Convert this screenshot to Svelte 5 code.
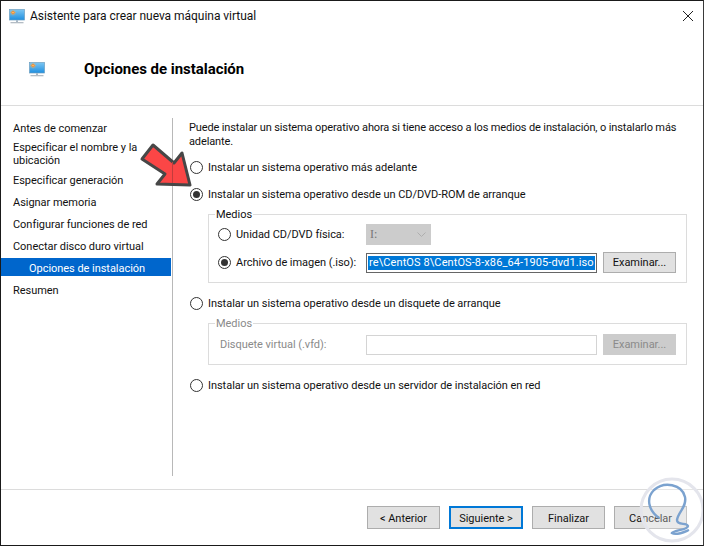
<script>
  const steps = [
    { label: 'Antes de comenzar', cls: '' },
    { label: 'Especificar el nombre y la ubicación', cls: 'two' },
    { label: 'Especificar generación', cls: '' },
    { label: 'Asignar memoria', cls: '' },
    { label: 'Configurar funciones de red', cls: '' },
    { label: 'Conectar disco duro virtual', cls: '' },
    { label: 'Opciones de instalación', cls: 'active' },
    { label: 'Resumen', cls: '' }
  ];
</script>

{#snippet monitor(id, w, h)}
  <svg width={w} height={h} viewBox="0 0 16 15">
    <defs>
      <linearGradient id={id} x1="0" y1="0" x2="0" y2="1">
        <stop offset="0" stop-color="#7cc6f2" />
        <stop offset="1" stop-color="#1f8fe0" />
      </linearGradient>
    </defs>
    <rect x="0.5" y="0.5" width="15" height="10.5" fill="url(#{id})" stroke="#6d9fc0" stroke-width="0.7" />
    <path d="M4 0.8 V6.4 M1.2 3.6 H6.8 M2 1.6 L6 5.6 M6 1.6 L2 5.6" stroke="#f4a850" stroke-width="0.8" />
    <circle cx="4" cy="3.6" r="1.5" fill="#f08c30" />
    <circle cx="4" cy="3.6" r="0.6" fill="#ffe2a8" />
    <rect x="7" y="11.3" width="2" height="1.6" fill="#9db0bf" />
    <rect x="1.5" y="13" width="13" height="1.3" fill="#b4bcc4" />
  </svg>
{/snippet}

{#snippet radio(checked)}
  <span class="radio">
    {#if checked}<span class="dot"></span>{/if}
  </span>
{/snippet}

<div class="window">
  <div class="titlebar">
    <span class="title-icon">{@render monitor('mon-a', 16, 15)}</span>
    <span class="title-text">Asistente para crear nueva máquina virtual</span>
    <svg class="close" width="10" height="10" viewBox="0 0 10 10">
      <path d="M0 0 L10 10 M10 0 L0 10" stroke="#222" stroke-width="1" />
    </svg>
  </div>

  <header class="head">
    <span class="head-icon">{@render monitor('mon-b', 16, 15)}</span>
    <h1>Opciones de instalación</h1>
  </header>

  <div class="body">
    <nav class="steps">
      {#each steps as step}
        <div class="step {step.cls}">{step.label}</div>
      {/each}
    </nav>

    <main class="content">
      <p class="intro">Puede instalar un sistema operativo ahora si tiene acceso a los medios de instalación, o instalarlo más<br>adelante.</p>

      <div class="option">{@render radio(false)}<span>Instalar un sistema operativo más adelante</span></div>
      <div class="option second">{@render radio(true)}<span>Instalar un sistema operativo desde un CD/DVD-ROM de arranque</span></div>

      <fieldset class="group">
        <legend>Medios</legend>
        <div class="row r1">
          {@render radio(false)}
          <span class="lbl">Unidad CD/DVD física:</span>
          <div class="select"><span class="drive">I:</span>
            <svg width="9" height="5" viewBox="0 0 9 5"><path d="M0.5 0.5 L4.5 4.5 L8.5 0.5" fill="none" stroke="#aeaeae" /></svg>
          </div>
        </div>
        <div class="row r2">
          {@render radio(true)}
          <span class="lbl">Archivo de imagen (.iso):</span>
          <div class="input focus"><span class="sel">re\CentOS 8\CentOS-8-x86_64-1905-dvd1.iso</span></div>
          <div class="btn browse">Examinar...</div>
        </div>
      </fieldset>

      <div class="option floppy">{@render radio(false)}<span>Instalar un sistema operativo desde un disquete de arranque</span></div>

      <fieldset class="group off">
        <legend>Medios</legend>
        <div class="row r3">
          <span class="lbl">Disquete virtual (.vfd):</span>
          <div class="input"></div>
          <div class="btn browse disabled">Examinar...</div>
        </div>
      </fieldset>

      <div class="option net">{@render radio(false)}<span>Instalar un sistema operativo desde un servidor de instalación en red</span></div>
    </main>
  </div>

  <footer class="foot">
    <div class="btn">&lt; Anterior</div>
    <div class="btn primary">Siguiente &gt;</div>
    <div class="btn">Finalizar</div>
    <div class="btn">Cancelar</div>
  </footer>

  <!-- red arrow pasted on the screenshot -->
  <svg class="arrow" width="60" height="50" viewBox="137 141 60 50">
    <path d="M153 145 L174 163 L182 153 L190 185 L157 184 L165 174 L142 159 Z" fill="#fb4646" stroke="#474747" stroke-width="3" stroke-linejoin="round" />
    <path d="M172.5 162 V183" stroke="#c23c3c" />
  </svg>

  <!-- watermark -->
  <svg class="mark" width="68" height="72" viewBox="636 474 68 72">
    <circle cx="672" cy="510" r="31" fill="#fff" fill-opacity="0.3" stroke="#e4e5ec" stroke-width="3" />
    <path d="M659 518 C648 510 646 498 654 490 C664 481 682 484 685 497 C687 507 678 512 677 520 C677 526 687 522 688 526 C688 530 674 530 672 533 C676 536 684 532 689 530" fill="none" stroke="#7ba2cf" stroke-width="2.4" />
  </svg>
</div>

<style>
  :global(body) {
    margin: 0;
    background: #fff;
  }
  .window {
    position: relative;
    box-sizing: border-box;
    width: 704px;
    height: 546px;
    border: 1px solid #1a1a1a;
    border-right-color: #3a3a3a;
    background: #fff;
    color: #111;
    font-family: Roboto, "Noto Sans", sans-serif;
    font-size: 11px;
    letter-spacing: -0.04px;
    overflow: hidden;
    display: flex;
    flex-direction: column;
  }
  .titlebar {
    display: flex;
    align-items: center;
    height: 30px;
    padding-left: 8px;
    flex: none;
  }
  .title-icon {
    display: flex;
    margin-right: 5px;
  }
  .title-text {
    font-size: 12px;
    flex: 1;
    letter-spacing: -0.03px;
  }
  .close {
    margin-right: 10px;
  }
  .head {
    display: flex;
    align-items: center;
    height: 75px;
    flex: none;
    border-bottom: 1px solid #dcdcdc;
    padding-left: 28px;
    box-sizing: border-box;
  }
  .head-icon {
    display: flex;
    width: 55px;
    padding-top: 2px;
  }
  h1 {
    margin: 0;
    padding-top: 2px;
    font-size: 15px;
    font-weight: 700;
    color: #000;
  }
  .body {
    display: flex;
    flex: 1;
    min-height: 0;
  }
  .steps {
    width: 170px;
    flex: none;
    padding-top: 11px;
  }
  .step {
    display: flex;
    align-items: center;
    padding-left: 12px;
    box-sizing: border-box;
    height: 22px;
  }
  .two {
    height: 30px;
    line-height: 13px;
    padding-right: 20px;
  }
  .active {
    height: 18px;
    margin: 1px 0 3px;
    padding-top: 2px;
    background: #0066cc;
    color: #fff;
    padding-left: 28px;
  }
  .content {
    flex: 1;
    border-left: 1px solid #b8b8b8;
    margin: 12px 0 13px 1px;
    padding: 3px 16px 0 17px;
    min-width: 0;
  }
  .intro {
    margin: 0 0 0 -1px;
    line-height: 14px;
    letter-spacing: -0.13px;
    white-space: nowrap;
  }
  .option {
    display: flex;
    align-items: center;
    gap: 5px;
    height: 16px;
    margin-top: 10px;
  }
  .second {
    margin-top: 11px;
  }
  .radio {
    box-sizing: border-box;
    width: 13px;
    height: 13px;
    border: 1px solid #333;
    border-radius: 50%;
    background: #fff;
    display: flex;
    align-items: center;
    justify-content: center;
    flex: none;
  }
  .dot {
    width: 7px;
    height: 7px;
    border-radius: 50%;
    background: #333;
  }
  .group {
    margin: 5px 0 0 18px;
    padding: 0 0 0 9px;
    width: 479px;
    box-sizing: border-box;
    height: 76px;
    border: 1px solid #dcdcdc;
    min-inline-size: 0;
  }
  .group legend {
    padding: 0 1px;
    margin-left: -3px;
    height: 14px;
    line-height: 16px;
  }
  .row {
    display: flex;
    align-items: center;
    height: 21px;
  }
  .row .radio {
    margin-right: 5px;
  }
  .lbl {
    width: 130px;
    flex: none;
  }
  .r1 {
    margin-top: 3px;
  }
  .r2 {
    margin-top: 7px;
  }
  .select {
    box-sizing: border-box;
    width: 65px;
    height: 21px;
    background: #cccccc;
    color: #777;
    display: flex;
    align-items: center;
    justify-content: space-between;
    padding: 0 5px 0 4px;
  }
  .drive {
    font-family: "Liberation Serif", serif;
    font-size: 12px;
  }
  .input {
    box-sizing: border-box;
    width: 231px;
    height: 20px;
    border: 1px solid #d4d4d4;
    background: #fff;
    white-space: nowrap;
    display: flex;
    align-items: center;
    flex: none;
  }
  .input.focus {
    border-color: #666;
    padding-left: 1px;
  }
  .sel {
    background: #0078d7;
    color: #fff;
    line-height: 14px;
    padding: 0 1px;
    letter-spacing: 0.1px;
  }
  .btn {
    box-sizing: border-box;
    width: 73px;
    height: 23px;
    background: #e1e1e1;
    border: 1px solid #adadad;
    display: flex;
    align-items: center;
    justify-content: center;
    flex: none;
  }
  .browse {
    margin-left: 6px;
    height: 21px;
  }
  .disabled {
    background: #cccccc;
    border-color: #cccccc;
    color: #8a8a8a;
  }
  .off {
    margin-top: 5px;
    height: 49px;
    color: #8a8a8a;
  }
  .off .lbl {
    width: 148px;
    padding-left: 2px;
    box-sizing: border-box;
  }
  .r3 {
    margin-top: 4px;
  }
  .floppy {
    margin-top: 12px;
  }
  .net {
    margin-top: 12px;
  }
  .foot {
    flex: none;
    height: 56px;
    box-sizing: border-box;
    border-top: 1px solid #dcdcdc;
    display: flex;
    justify-content: flex-end;
    gap: 9px;
    padding: 16px 16px 0 0;
  }
  .foot .btn {
    padding-top: 1px;
  }
  .foot .primary {
    width: 74px;
    border: 2px solid #0078d7;
  }
  .arrow {
    position: absolute;
    left: 136px;
    top: 140px;
  }
  .mark {
    position: absolute;
    left: 635px;
    top: 473px;
  }
</style>
